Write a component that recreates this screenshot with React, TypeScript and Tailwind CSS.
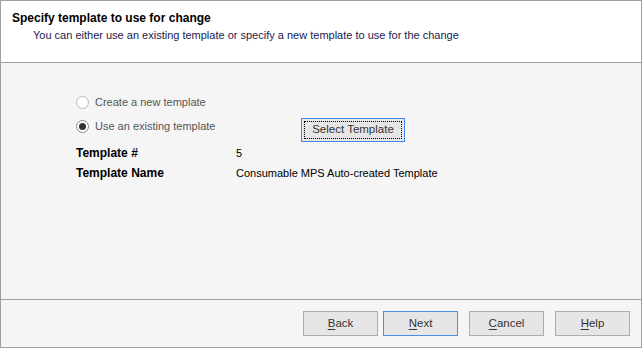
import React, { useState } from 'react';

const FONT = { fontFamily: '"Liberation Sans", Arial, sans-serif' };

type Choice = 'new' | 'existing';

function Radio({ checked, disabled, label, onSelect }: { checked: boolean; disabled?: boolean; label: string; onSelect: () => void }) {
  return (
    <label className="flex h-[18px] cursor-default items-center gap-[6px]" onClick={onSelect}>
      <span
        className={`flex h-[13px] w-[13px] items-center justify-center rounded-full border bg-white ${
          disabled ? 'border-[#bcbcbc]' : 'border-[#8a8a8a]'
        }`}
      >
        {checked && <span className="h-[7px] w-[7px] rounded-full bg-[#333333]" />}
      </span>
      <span className="text-[11px] text-[#555555]">{label}</span>
    </label>
  );
}

function FooterButton({ label, focused }: { label: string; focused?: boolean }) {
  return (
    <button
      type="button"
      className={`h-[25px] w-[75px] border bg-[#e6e6e6] text-[11.5px] text-[#333333] ${
        focused ? 'border-[#4a90e2]' : 'border-[#adadad]'
      }`}
    >
      <span className="underline underline-offset-2">{label[0]}</span>
      {label.slice(1)}
    </button>
  );
}

export default function App() {
  const [choice, setChoice] = useState<Choice>('existing');

  return (
    <div style={FONT} className="flex h-[348px] w-[642px] flex-col border border-[#a0a0a0] bg-[#f5f5f5]">
      {/* wizard header */}
      <div className="h-[62px] border-b border-[#a0a0a0] bg-white pl-[11px] pt-[10px]">
        <div className="text-[12px] font-bold leading-[15px] text-black">Specify template to use for change</div>
        <div className="pl-[21px] pt-[2px] text-[11px] leading-[14px] text-[#1a1a4e]">
          You can either use an existing template or specify a new template to use for the change
        </div>
      </div>

      {/* body */}
      <div className="flex-1 pl-[75px] pt-[30px]">
        <Radio checked={choice === 'new'} disabled label="Create a new template" onSelect={() => setChoice('new')} />
        <div className="mt-[6px] flex items-start">
          <div className="w-[225px]">
            <Radio checked={choice === 'existing'} label="Use an existing template" onSelect={() => setChoice('existing')} />
          </div>
          <button
            type="button"
            className="mt-[1px] h-[24px] w-[104px] border border-[#3c8ce6] bg-[#e6e6e6] p-[2px] text-[11.5px] text-[#333333]"
          >
            <span className="flex h-full w-full items-center justify-center border border-dotted border-black">
              Select Template
            </span>
          </button>
        </div>
        <div className="mt-[4px] grid grid-cols-[160px_1fr] gap-y-[5px] leading-[15px] text-black">
          <span className="text-[12px] font-bold">Template #</span>
          <span className="text-[11px]">5</span>
          <span className="text-[12px] font-bold">Template Name</span>
          <span className="text-[11px]">Consumable MPS Auto-created Template</span>
        </div>
      </div>

      {/* footer buttons */}
      <div className="flex h-[48px] items-start border-t border-[#a0a0a0] pr-[11px] pt-[11px]">
        <div className="ml-auto flex gap-[5px]">
          <FooterButton label="Back" />
          <FooterButton label="Next" focused />
        </div>
        <div className="ml-[11px] flex gap-[11px]">
          <FooterButton label="Cancel" />
          <FooterButton label="Help" />
        </div>
      </div>
    </div>
  );
}
